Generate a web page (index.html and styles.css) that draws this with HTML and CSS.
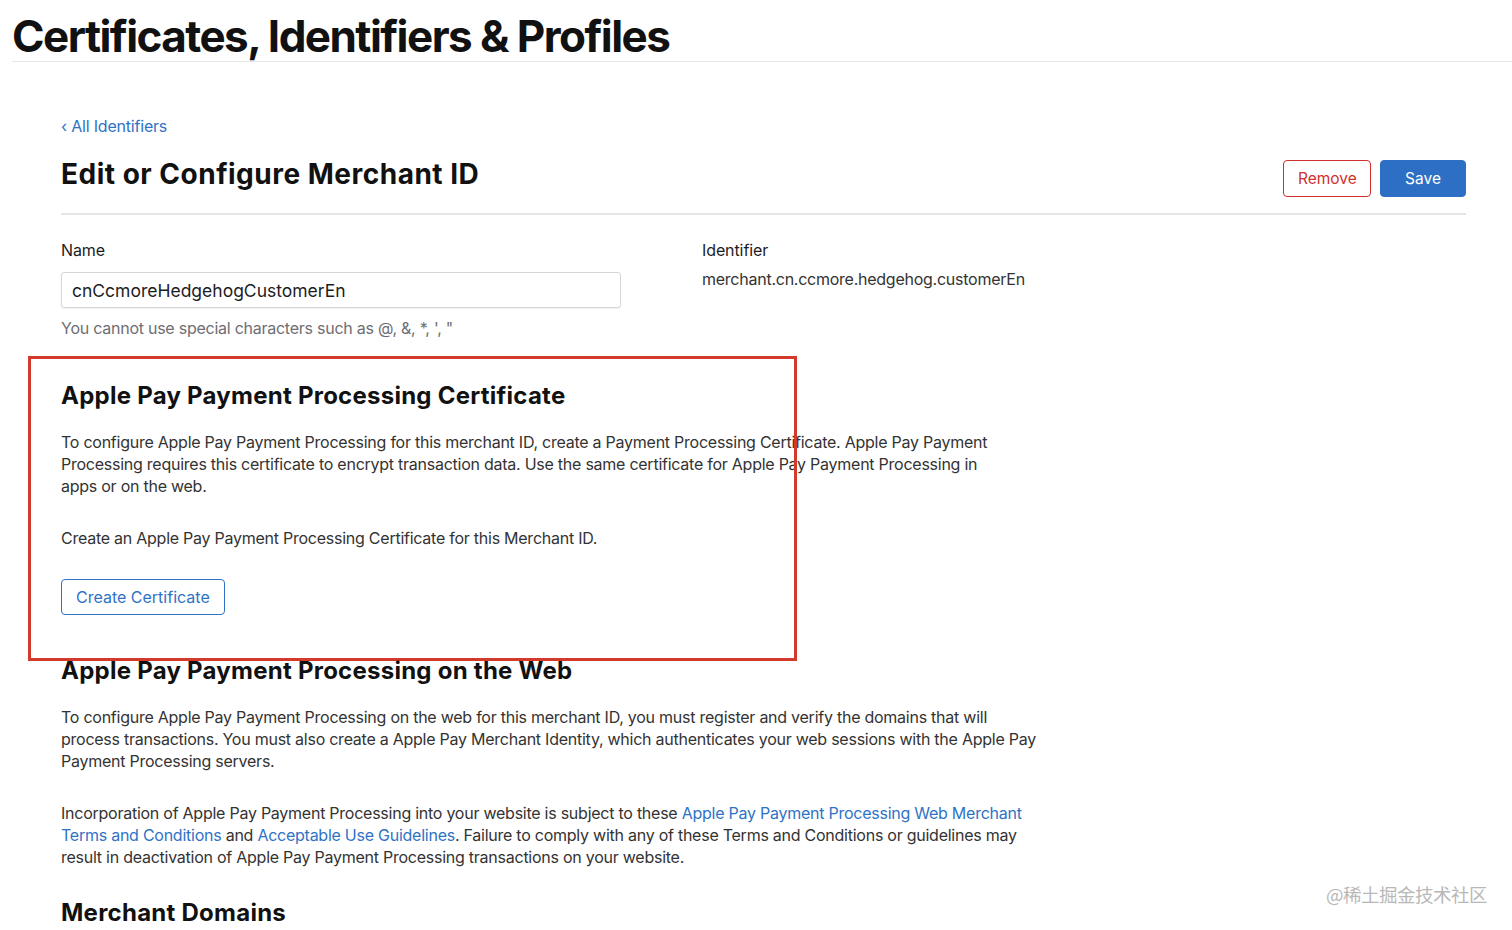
FILE: index.html
```html
<!DOCTYPE html>
<html>
<head>
<meta charset="utf-8">
<link rel="stylesheet" href="styles.css">
</head>
<body>
<header class="top">
  <h1 class="brand">Certificates, Identifiers &amp; Profiles</h1>
</header>
<main class="page">
  <a class="back" href="#">‹ All Identifiers</a>
  <div class="head-row">
    <h2 class="title">Edit or Configure Merchant ID</h2>
    <div class="actions">
      <button class="btn btn-remove">Remove</button>
      <button class="btn btn-save">Save</button>
    </div>
  </div>
  <div class="fields">
    <div class="field">
      <label class="label">Name</label>
      <input class="input" type="text" value="cnCcmoreHedgehogCustomerEn">
      <p class="hint">You cannot use special characters such as @, &amp;, *, ', "</p>
    </div>
    <div class="field field-id">
      <div class="label">Identifier</div>
      <div class="value">merchant.cn.ccmore.hedgehog.customerEn</div>
    </div>
  </div>

  <section class="section sec-cert">
    <h3 class="sec-title">Apple Pay Payment Processing Certificate</h3>
    <p class="text">To configure Apple Pay Payment Processing for this merchant ID, create a Payment Processing Certificate. Apple Pay Payment Processing requires this certificate to encrypt transaction data. Use the same certificate for Apple Pay Payment Processing in apps or on the web.</p>
    <p class="text">Create an Apple Pay Payment Processing Certificate for this Merchant ID.</p>
    <button class="btn btn-outline">Create Certificate</button>
    <div class="highlight"></div>
  </section>

  <section class="section sec-web">
    <h3 class="sec-title">Apple Pay Payment Processing on the Web</h3>
    <p class="text">To configure Apple Pay Payment Processing on the web for this merchant ID, you must register and verify the domains that will process transactions. You must also create a Apple Pay Merchant Identity, which authenticates your web sessions with the Apple Pay Payment Processing servers.</p>
    <p class="text">Incorporation of Apple Pay Payment Processing into your website is subject to these <a href="#">Apple Pay Payment Processing Web Merchant Terms and Conditions</a> and <a href="#">Acceptable Use Guidelines</a>. Failure to comply with any of these Terms and Conditions or guidelines may result in deactivation of Apple Pay Payment Processing transactions on your website.</p>
  </section>

  <h3 class="sec-title domains">Merchant Domains</h3>
</main>
<div class="watermark">@稀土掘金技术社区</div>
</body>
</html>
```

FILE: styles.css
```css
* { box-sizing: border-box; }
html, body { margin: 0; padding: 0; }
body {
  font-family: Inter, "Noto Sans", sans-serif;
  color: #1d1d1f;
  background: #fff;
  width: 1512px;
  height: 930px;
  overflow: hidden;
  position: relative;
}
.top {
  margin-left: 12px;
  border-bottom: 1px solid #e6e6e6;
  height: 62px;
}
.brand {
  margin: 0;
  padding-top: 11px;
  font-size: 44px;
  font-weight: 700;
  letter-spacing: -1.55px;
  line-height: 50px;
  color: #111;
}
.page {
  padding: 0 46px 0 61px;
}
.back {
  display: block;
  margin-top: 54px;
  font-size: 16px;
  letter-spacing: -0.2px;
  line-height: 20px;
  color: #2f73c6;
  text-decoration: none;
}
.head-row {
  display: flex;
  justify-content: space-between;
  align-items: flex-start;
  margin-top: 21px;
  padding-bottom: 16px;
  border-bottom: 2px solid #e5e5e5;
}
.title {
  margin: 0;
  font-size: 28px;
  font-weight: 700;
  line-height: 34px;
  letter-spacing: 0.5px;
  color: #111;
}
.actions {
  display: flex;
  gap: 9px;
  margin-top: 3px;
}
.btn {
  font-family: inherit;
  font-size: 15.5px;
  height: 37px;
  border-radius: 4px;
  padding: 0 14px;
  cursor: pointer;
}
.btn-remove {
  width: 88px;
  background: #fff;
  color: #d0312d;
  border: 1px solid #d0312d;
}
.btn-save {
  width: 86px;
  background: #2e6fc6;
  color: #fff;
  border: 1px solid #2e6fc6;
}
.fields {
  display: grid;
  grid-template-columns: 560px 1fr;
  column-gap: 81px;
  margin-top: 23px;
}
.label {
  display: block;
  font-size: 16px;
  letter-spacing: -0.1px;
  line-height: 24px;
  color: #1d1d1f;
}
.input {
  display: block;
  width: 560px;
  height: 36px;
  margin-top: 10px;
  border: 1px solid #d6d6d6;
  border-radius: 3px;
  padding: 0 10px;
  font-family: inherit;
  font-size: 17.5px;
  color: #1d1d1f;
  box-shadow: 0 1px 1px rgba(0,0,0,0.05);
}
.hint {
  margin: 9px 0 0;
  font-size: 16px;
  letter-spacing: -0.25px;
  line-height: 22px;
  color: #6e6e73;
}
.value {
  margin-top: 7px;
  font-size: 16px;
  letter-spacing: -0.25px;
  line-height: 20px;
  color: #333;
}
.section {
  position: relative;
}
.sec-cert { margin-top: 42px; width: 940px; }
.sec-title {
  margin: 0;
  font-size: 24px;
  font-weight: 700;
  line-height: 30px;
  letter-spacing: 0.25px;
  color: #111;
  white-space: nowrap;
}
.text {
  margin: 20px 0 0;
  font-size: 16px;
  letter-spacing: -0.25px;
  line-height: 22px;
  color: #333;
}
.text + .text { margin-top: 30px; }
.text a { color: #2f73c6; text-decoration: none; }
.btn-outline {
  display: block;
  margin-top: 30px;
  height: 36px;
  padding: 0 14px;
  font-size: 16px;
  background: #fff;
  color: #2f73c6;
  border: 1px solid #2f73c6;
}
.highlight {
  position: absolute;
  left: -33px;
  top: -25px;
  width: 769px;
  height: 305px;
  border: 3px solid #d33a2c;
  pointer-events: none;
}
.sec-web { margin-top: 41px; width: 985px; }
.domains { margin-top: 30px; }
.watermark {
  position: absolute;
  left: 1326px;
  top: 881px;
  font-family: "Noto Sans CJK SC", sans-serif;
  font-size: 18.5px;
  color: #b8b8b8;
  letter-spacing: -0.5px;
}
```
